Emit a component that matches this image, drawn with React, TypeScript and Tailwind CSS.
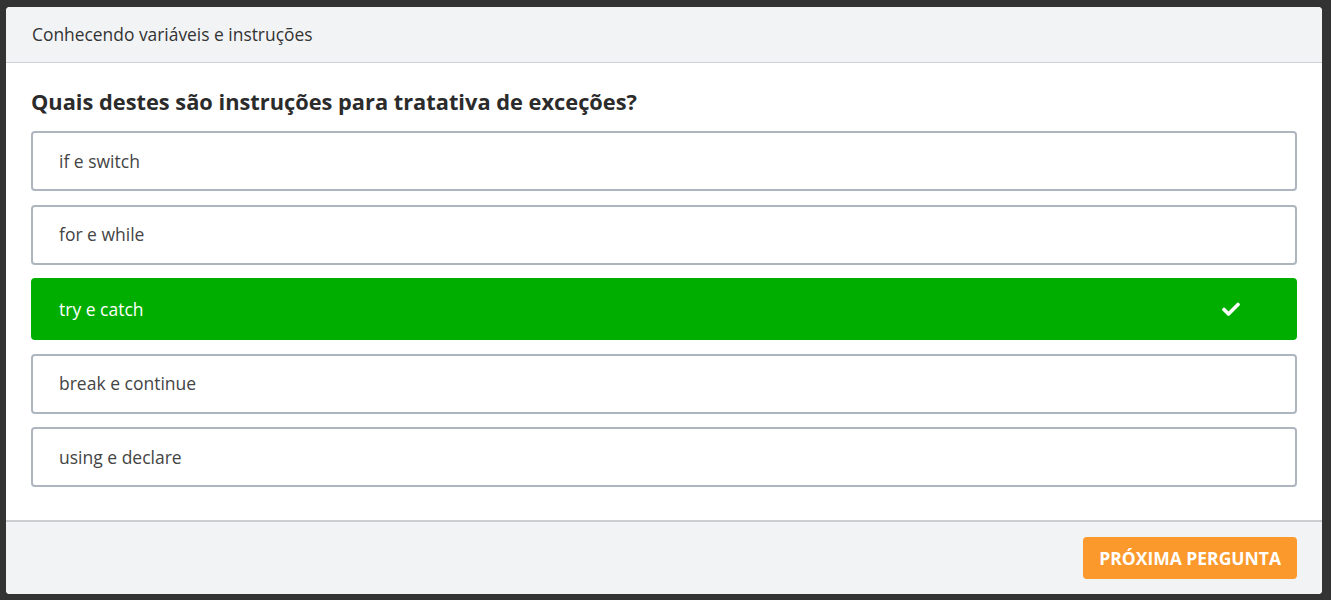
const options = [
  { label: "if e switch", correct: false },
  { label: "for e while", correct: false },
  { label: "try e catch", correct: true },
  { label: "break e continue", correct: false },
  { label: "using e declare", correct: false },
];

function Check() {
  return (
    <svg width="18" height="14" viewBox="0 0 18 14" fill="none">
      <path
        d="M2 7.5 L6.5 12 L16 2.5"
        stroke="white"
        strokeWidth="3.6"
        strokeLinecap="round"
        strokeLinejoin="round"
      />
    </svg>
  );
}

export default function App() {
  return (
    <div
      className="h-[600px] w-full bg-[#333333] pb-[6px] pl-[6px] pr-[9px] pt-[7px]"
      style={{ fontFamily: '"Open Sans", sans-serif' }}
    >
      <div className="flex h-full flex-col overflow-hidden rounded-[4px] bg-white">
        <div className="flex h-[56px] shrink-0 items-center border-b border-[#cfd2d6] bg-[#f2f3f5] px-[26px] text-[17.4px] text-[#333]">
          Conhecendo variáveis e instruções
        </div>

        <div className="flex flex-1 flex-col px-[25px] pt-[25px]">
          <h1 className="mb-[15px] text-[21.8px] font-bold leading-[28px] text-[#2b2b2b]">
            Quais destes são instruções para tratativa de exceções?
          </h1>
          <div className="flex flex-col gap-[13.5px]">
            {options.map((o) =>
              o.correct ? (
                <div
                  key={o.label}
                  className="flex h-[62px] items-center justify-between rounded-[4px] bg-[#00ae00] pl-[28px] pr-[57px] text-[17.5px] text-white"
                >
                  <span>{o.label}</span>
                  <Check />
                </div>
              ) : (
                <div
                  key={o.label}
                  className="flex h-[60px] items-center rounded-[4px] border-2 border-[#adb5bf] pl-[26px] text-[17.5px] text-[#444]"
                >
                  {o.label}
                </div>
              )
            )}
          </div>
        </div>

        <div className="flex h-[74px] shrink-0 items-center justify-end border-t-2 border-[#cccdd0] bg-[#f2f3f5] px-[25px]">
          <button className="h-[42px] rounded-[4px] bg-[#fb992c] px-[16px] text-[17.5px] font-bold uppercase text-white">
            Próxima pergunta
          </button>
        </div>
      </div>
    </div>
  );
}
